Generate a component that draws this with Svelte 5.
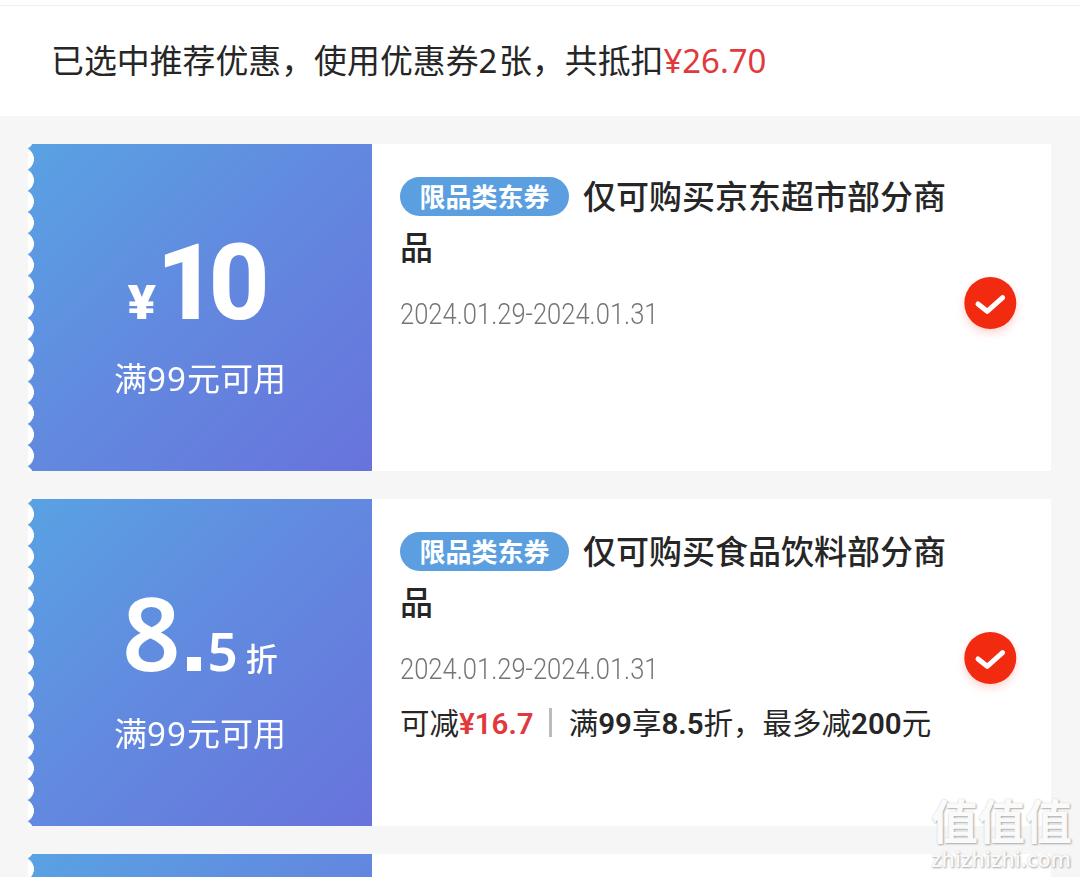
<script lang="ts">
  type Coupon = {
    id: number;
    kind: "cash" | "discount";
    major: string;
    minor?: string;
    condition: string;
    tag: string;
    title: string;
    period: string;
    saving?: string;
    selected: boolean;
  };

  const coupons: Coupon[] = [
    {
      id: 1,
      kind: "cash",
      major: "10",
      condition: "99",
      tag: "限品类东券",
      title: "仅可购买京东超市部分商品",
      period: "2024.01.29-2024.01.31",
      selected: true
    },
    {
      id: 2,
      kind: "discount",
      major: "8",
      minor: "5",
      condition: "99",
      tag: "限品类东券",
      title: "仅可购买食品饮料部分商品",
      period: "2024.01.29-2024.01.31",
      saving: "¥16.7",
      selected: true
    }
  ];
</script>

<div class="page">
  <header class="summary">
    <p>已选中推荐优惠，使用优惠券<span class="count">2</span>张，共抵扣<span class="total">¥26.70</span></p>
  </header>

  <main class="list">
    {#each coupons as coupon (coupon.id)}
      <article class="coupon">
        <div class="value">
          <div class="amount {coupon.kind}">
            {#if coupon.kind === "cash"}
              <span class="yen">¥</span><span class="major">{coupon.major}</span>
            {:else}
              <span class="major">{coupon.major}</span><span class="dot"></span><span class="minor">{coupon.minor}</span><span class="unit">折</span>
            {/if}
          </div>
          <div class="condition">满<span>{coupon.condition}</span>元可用</div>
        </div>

        <div class="info">
          <div class="text">
            <h2><span class="tag">{coupon.tag}</span>{coupon.title}</h2>
            <div class="period">{coupon.period}</div>
            {#if coupon.saving}
              <div class="saving">
                <span>可减<b class="red">{coupon.saving}</b></span>
                <i class="divider"></i>
                <span>满<b>99</b>享<b>8.5</b>折，最多减<b>200</b>元</span>
              </div>
            {/if}
          </div>
          {#if coupon.selected}
            <svg class="check" viewBox="0 0 52 52" aria-hidden="true">
              <circle cx="26.3" cy="26" r="26" fill="#f22a10" />
              <path d="M14 27 L23.2 34.3 L38.6 20.6" />
            </svg>
          {/if}
        </div>
      </article>
    {/each}

    <article class="coupon">
      <div class="value"></div>
      <div class="info"></div>
    </article>
  </main>

  <div class="watermark">
    <div class="mark">值值值</div>
    <div class="site">zhizhizhi.com</div>
  </div>
</div>

<style>
  :global(body) {
    margin: 0;
  }

  .page {
    position: relative;
    width: 1080px;
    height: 877px;
    overflow: hidden;
    background: #f6f6f6;
    color: #262626;
    font-family: "Noto Sans CJK SC", sans-serif;
  }

  .summary {
    display: flex;
    align-items: center;
    box-sizing: border-box;
    height: 116px;
    padding: 4px 0 0 51px;
    background: linear-gradient(#fff 5px, #f1f1f1 5px, #f1f1f1 6px, #fff 6px);
  }

  .summary p {
    margin: 0;
    font-size: 32.9px;
    line-height: 48px;
    white-space: nowrap;
  }

  .count,
  .total {
    font-family: "Noto Sans", sans-serif;
  }

  .count {
    letter-spacing: 1.6px;
  }

  .total {
    color: #e0393e;
  }

  .list {
    display: flex;
    flex-direction: column;
    gap: 28px;
    padding: 28px 29px 0 28px;
  }

  .coupon {
    display: flex;
    flex-shrink: 0;
    height: 327px;
    background: #fff;
  }

  .value {
    display: flex;
    flex-direction: column;
    align-items: center;
    box-sizing: border-box;
    width: 344px;
    padding-top: 84px;
    color: #fff;
    background: linear-gradient(135deg, #59a2e3 0%, #6289df 48%, #6873dc 100%);
    /* perforated left edge */
    mask:
      radial-gradient(circle 12px at -6px 50%, transparent 11.6px, #000 12.2px) 0 4.5px / 344px 21.2px repeat-y;
  }

  .amount {
    display: flex;
    align-items: baseline;
    height: 110px;
    line-height: 110px;
  }

  .cash {
    font-family: Roboto, sans-serif;
    font-weight: 800;
  }

  .yen {
    font-size: 48px;
    font-weight: 900;
    transform: scaleX(1.1);
    transform-origin: right;
  }

  .cash .major {
    margin-right: 9px;
    font-size: 106px;
    letter-spacing: -9px;
  }

  .discount {
    line-height: 97px;
    font-family: "Noto Sans", sans-serif;
    font-weight: 600;
  }

  .discount .major {
    font-size: 102px;
  }

  .dot {
    width: 14px;
    height: 14px;
    margin: 0 7px 0 6px;
    background: #fff;
  }

  .minor {
    font-size: 53px;
  }

  .unit {
    margin-left: 8px;
    font-family: "Noto Sans CJK SC", sans-serif;
    font-size: 32px;
    font-weight: 500;
  }

  .condition {
    margin-top: 15px;
    font-size: 33px;
    line-height: 48px;
  }

  .condition span {
    font-family: "Noto Sans", sans-serif;
    letter-spacing: 1px;
  }

  .info {
    display: flex;
    flex: 1;
    justify-content: space-between;
    padding: 26px 35px 0 28px;
  }

  .text {
    width: 562px;
  }

  h2 {
    margin: 0;
    font-size: 33px;
    font-weight: 500;
    line-height: 51px;
  }

  .tag {
    display: inline-block;
    box-sizing: border-box;
    width: 169px;
    height: 39px;
    margin-right: 14px;
    border-radius: 20px;
    background: #5b9fe0;
    color: #fff;
    font-size: 26px;
    font-weight: 700;
    line-height: 37px;
    text-align: center;
    vertical-align: 2px;
  }

  .period {
    width: max-content;
    margin-top: 18px;
    color: #757575;
    font-family: Roboto, sans-serif;
    font-size: 29.5px;
    font-weight: 300;
    line-height: 48px;
    transform: scaleX(0.866);
    transform-origin: left;
  }

  .saving {
    display: flex;
    align-items: center;
    margin-top: 4px;
    font-size: 29.5px;
    line-height: 48px;
    white-space: nowrap;
  }

  .saving b {
    font-family: Roboto, sans-serif;
    font-weight: 600;
  }

  .saving .red {
    color: #e0393e;
  }

  .divider {
    width: 3px;
    height: 29px;
    margin: 0 17px 0 15px;
    background: #bbb;
  }

  .check {
    width: 52px;
    height: 52px;
    margin-top: 107px;
    overflow: visible;
    filter: drop-shadow(0 4px 4px rgba(242, 42, 16, 0.2));
  }

  .check path {
    fill: none;
    stroke: #fff;
    stroke-width: 5;
    stroke-linecap: round;
    stroke-linejoin: round;
  }

  .watermark {
    position: absolute;
    right: 8px;
    bottom: 5px;
    color: #fafafa;
    text-shadow: 1px 1px 2px #aaa, 0 0 2px #ddd;
  }

  .mark {
    font-size: 47px;
    font-weight: 700;
    line-height: 54px;
  }

  .site {
    font-family: "Open Sans", sans-serif;
    font-size: 21.5px;
    font-weight: 600;
    line-height: 26px;
  }
</style>
